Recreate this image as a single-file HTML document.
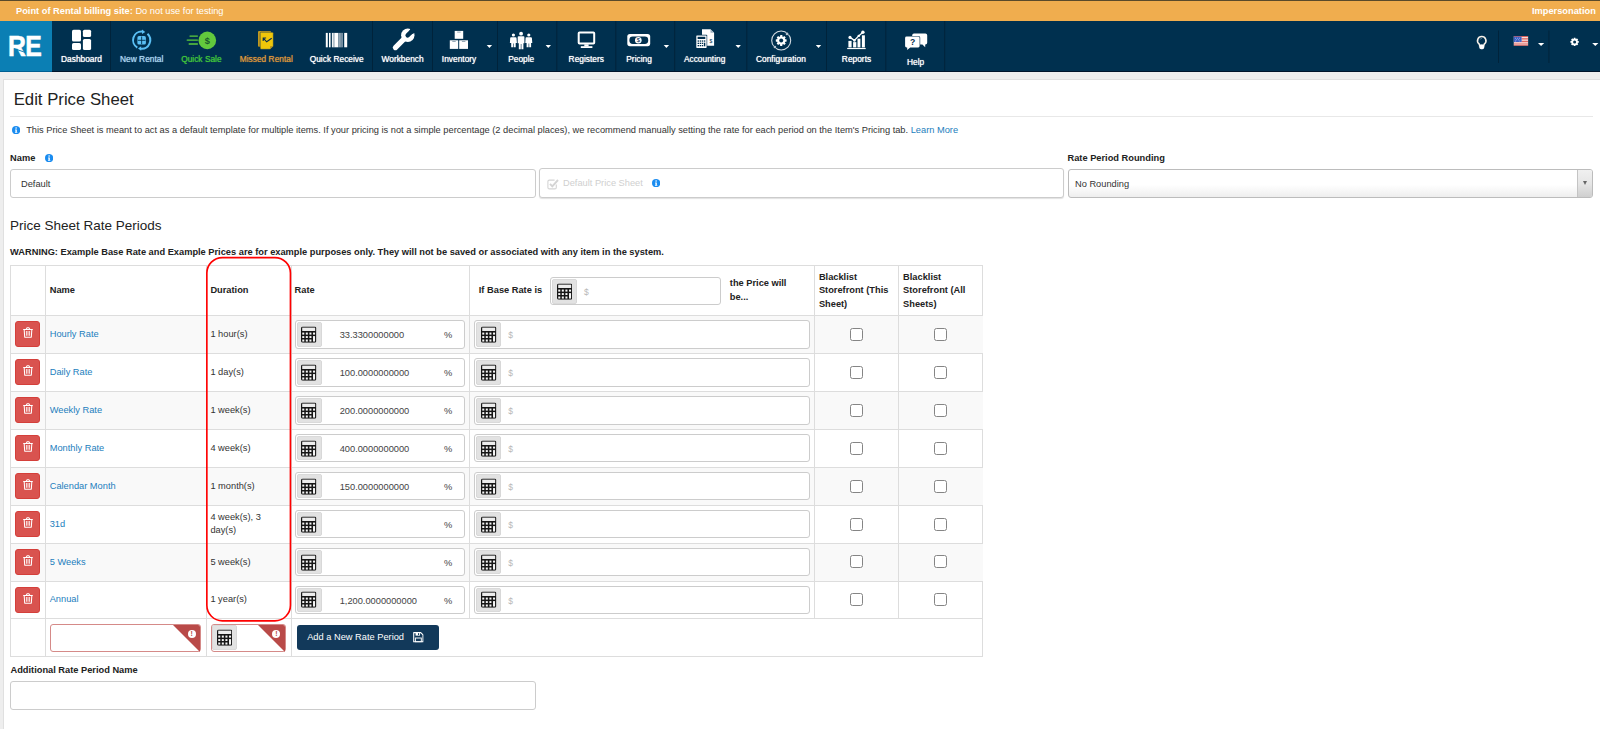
<!DOCTYPE html>
<html lang="en">
<head>
<meta charset="utf-8">
<title>Edit Price Sheet</title>
<style>
*{box-sizing:border-box;margin:0;padding:0}
html,body{width:1600px;height:729px;overflow:hidden}
body{font-family:"Liberation Sans",sans-serif;font-size:9.27px;color:#333;background:#eee;position:relative}
.abs{position:absolute}
#topbar{position:absolute;left:0;top:0;width:1600px;height:21px;background:#f0ad4e;border-top:1px solid #5a4a2a;color:#fff;font-size:9.27px;line-height:20.8px}
#topbar b{position:absolute;left:16px;top:0;white-space:nowrap}
#topbar b span{font-weight:normal}
#topbar .imp{position:absolute;right:4.2px;top:0;font-weight:bold}
#nav{position:absolute;left:0;top:21px;width:1600px;height:50.8px;background:#00304f;border-bottom:1.3px solid #00152b}
#logo{position:absolute;left:0;top:0;width:51.7px;height:50.8px;background:#0b7fb4;border-bottom:1.3px solid #005f92;z-index:2}
.ni{position:absolute;top:0;height:50px;text-align:center;color:#fff;font-size:8.4px;white-space:nowrap}
.ni .lb{position:absolute;left:-40px;right:-40px;top:31.5px;line-height:10px;text-align:center;text-shadow:0 0 1px rgba(255,255,255,.35)}
.ni svg{position:absolute}
.sep{position:absolute;top:0;width:1px;height:49px;background:#00233b}
.caret{position:absolute;top:24px;width:0;height:0;border-left:3px solid transparent;border-right:3px solid transparent;border-top:3px solid #fff}
#panel{position:absolute;left:2.5px;top:79.2px;width:1600px;height:660px;background:#fff;border:1px solid #e0e0e0}
h1{position:absolute;left:13.7px;top:89.7px;font-size:16.74px;font-weight:normal;line-height:20px;color:#222;white-space:nowrap}
.hr{position:absolute;left:10px;top:116px;width:1583px;height:1px;background:#e8e8e8}
.t{position:absolute;white-space:nowrap;line-height:12px}
.b{font-weight:bold;color:#222}
a,.lnk{color:#1c7ebd;text-decoration:none}
.inp{position:absolute;background:#fff;border:1px solid #ccc;border-radius:3px}
h2{position:absolute;left:10px;top:217.8px;font-size:13.5px;font-weight:normal;line-height:16px;color:#222;white-space:nowrap}
.info{position:absolute;width:8.2px;height:8.2px}

.stripe{position:absolute;left:11px;width:971.5px;background:#f9f9f9}
.hl{position:absolute;left:10px;width:973px;height:1px;background:#ddd}
.vl{position:absolute;width:1px;background:#ddd}
.tr{position:absolute;left:15.2px;width:25px;height:26px;background:#d9534f;border:1px solid #d43f3a;border-radius:3px}
.tr svg{position:absolute;left:6.5px;top:5.5px;width:10px;height:11px}
.cb{position:absolute;left:1.2px;top:1.1px;width:24.4px;height:24.5px;background:#e2e2e2;border-radius:3px;box-shadow:inset 0 0 0 .6px #d2d2d2}
.cb svg{position:absolute;left:4.2px;top:3.7px;width:15.4px;height:17.2px}
.pr .cb svg{left:4.9px}
.rv,.pc,.dl{position:absolute;top:8px;line-height:12px;white-space:nowrap;color:#444}
.rv{left:43.7px}
.pc{left:148px}
.dl{left:32.9px;color:#b8b8b8;font-size:8.5px}
.ck{position:absolute;width:13px;height:13px;border:1px solid #858585;border-radius:2.5px;background:#fff}
.err{border-color:#d58a88}
.err .cb{left:.8px;top:.3px;width:24.6px;height:25.4px}
.err .cb svg{left:4.4px;top:4.1px}
.tri{position:absolute;right:0;top:0;width:0;height:0;border-top:27px solid #b94a48;border-left:27px solid transparent;border-top-right-radius:2px}
.ex{position:absolute;right:4.3px;top:5.7px;width:8px;height:8px;border-radius:50%;background:#fff;color:#b94a48;font-size:7px;font-weight:bold;line-height:8px;text-align:center}
.addb{position:absolute;width:142px;height:25.2px;background:#12395a;border-radius:3px;color:#fff;padding-left:10.2px;line-height:25px;white-space:nowrap}
.addb svg{position:absolute;left:116.3px;top:7px;width:10.7px;height:10.5px}
.red{position:absolute;left:200px;top:250px;width:100px;height:380px;overflow:visible}

#logo span{position:absolute;left:8.1px;top:11.2px;font-size:28.8px;line-height:28px;font-weight:bold;color:#fff;transform:scaleX(.86);transform-origin:0 0;letter-spacing:-0.6px;-webkit-text-stroke:0.55px #fff}
#logo i{position:absolute;left:13.6px;top:26.6px;width:11.5px;height:1px;background:#0b7fb4;transform:rotate(19deg);transform-origin:0 0}
.nl{position:absolute;top:32.6px;width:100px;margin-left:-50px;text-align:center;color:#fff;font-size:8.4px;line-height:10px;white-space:nowrap;text-shadow:0 0 .8px currentColor}
</style>
</head>
<body>
<svg width="0" height="0" style="position:absolute"><defs>
<symbol id="calc" viewBox="0 0 16 17"><rect x="0" y="0" width="16" height="17" rx="1.8" fill="#161616"/><rect x="1.25" y="1.25" width="13.5" height="3.5" fill="#ededed"/><g fill="#f6f6f6"><rect x="1.3" y="6.4" width="2.1" height="2.1"/><rect x="5" y="6.4" width="2.1" height="2.1"/><rect x="8.75" y="6.4" width="2.1" height="2.1"/><rect x="12.5" y="6.4" width="2.1" height="2.1"/><rect x="1.3" y="10.05" width="2.1" height="2"/><rect x="5" y="10.05" width="2.1" height="2"/><rect x="8.75" y="10.05" width="2.1" height="2"/><rect x="12.5" y="10.05" width="2.1" height="5.7"/><rect x="1.3" y="13.6" width="2.1" height="2.15"/><rect x="5" y="13.6" width="2.1" height="2.15"/><rect x="8.75" y="13.6" width="2.1" height="2.15"/></g></symbol>
<symbol id="info" viewBox="0 0 10 10"><circle cx="5" cy="5" r="5" fill="#1a8cf0"/><circle cx="5" cy="2.5" r="1" fill="#fff"/><path d="M3.7 4.2H5.9V7.3H6.5V8.2H3.6V7.3H4.2V5.1H3.7Z" fill="#fff"/></symbol>
<symbol id="trash" viewBox="0 0 10 11"><path d="M0.2 2.5H9.8M3.2 2.3L4.1 0.8H5.9L6.8 2.3M1.2 2.7L1.7 10.3H8.3L8.8 2.7" fill="none" stroke="#fff" stroke-width="1.05" stroke-linejoin="round"/><path d="M3.45 4.1V8.8M5 4.1V8.8M6.55 4.1V8.8" stroke="#f8d9d8" stroke-width="1.05" fill="none"/></symbol>
<symbol id="save" viewBox="0 0 11 11"><path d="M0.6 0.6H8L10.4 3V10.4H0.6Z" fill="none" stroke="#fff" stroke-width="1.2" stroke-linejoin="round"/><rect x="2.6" y="0.8" width="4.6" height="3" fill="#fff"/><rect x="5.2" y="1.2" width="1.1" height="2" fill="#12395a"/><rect x="2.4" y="6.3" width="6.2" height="4" fill="none" stroke="#fff" stroke-width="1"/></symbol>
</defs></svg>
<div id="topbar"><b>Point of Rental billing site: <span>Do not use for testing</span></b><span class="imp">Impersonation</span></div>
<div id="nav">
<div id="logo"><span>RE</span><i></i></div>
<svg id="navsvg" width="1600" height="51" viewBox="0 21 1600 51" style="position:absolute;left:0;top:0;overflow:visible">
<g fill="#00233b"><rect x="110" y="21" width="1" height="50"/><rect x="372" y="21" width="1" height="50"/><rect x="432" y="21" width="1" height="50"/><rect x="497" y="21" width="1" height="50"/><rect x="556.3" y="21" width="1" height="50"/><rect x="615.3" y="21" width="1" height="50"/><rect x="674.2" y="21" width="1" height="50"/><rect x="746.3" y="21" width="1" height="50"/><rect x="826" y="21" width="1" height="50"/><rect x="885.3" y="21" width="1" height="50"/><rect x="944.2" y="21" width="1" height="50"/><rect x="1498" y="30.5" width="1" height="32.5"/><rect x="1548.4" y="30.5" width="1" height="32.5"/></g>
<!-- dashboard -->
<g fill="#fff"><rect x="72" y="29.75" width="9" height="11.75" rx="1.6"/><rect x="72" y="43" width="9" height="7" rx="1.6"/><rect x="82.9" y="29.75" width="8.2" height="7.25" rx="1.6"/><rect x="82.9" y="38.9" width="8.2" height="11.1" rx="1.6"/></g>
<!-- new rental -->
<g fill="none" stroke="#5bc0f5" stroke-width="2"><path d="M137.3 47.55A8.6 8.6 0 0 1 142.2 31.55"/><path d="M147.5 33.85A8.6 8.6 0 0 1 141 48.7"/></g>
<g fill="#5bc0f5"><path d="M142 29.4L145.2 31.9L142 34Z"/><path d="M141.2 50.8L138 48.4L141.2 46.2Z"/><rect x="137.4" y="36.1" width="8.5" height="8.4" rx="1.6"/></g>
<g stroke="#00304f" stroke-width="0.9"><path d="M141.65 36.5V44.2M137.8 40.3H145.5"/></g>
<!-- quick sale -->
<g stroke="#5ccb3c" stroke-width="1.35" stroke-linecap="round"><path d="M190 36.1H197.4M187.2 40.1H197.4M189.2 44H197.4"/></g>
<circle cx="207.3" cy="40.4" r="8.8" fill="#62c93d"/>
<text x="207.4" y="43.9" font-family="Liberation Sans, sans-serif" font-size="9.3" font-weight="bold" text-anchor="middle" fill="#1b5a2b">$</text>
<!-- missed rental -->
<rect x="258" y="30.9" width="13.1" height="15.8" rx="1" fill="#c29a1f"/>
<path d="M261.2 32.2H272.3Q273.3 32.2 273.3 33.2V46L270 49.3H261.2Q260.2 49.3 260.2 48.3V33.2Q260.2 32.2 261.2 32.2Z" fill="#efc70a" stroke="#0a3350" stroke-width="0.5"/>
<path d="M270 49.3V46.6Q270 46 270.6 46H273.3Z" fill="#b8941c"/>
<path d="M263.5 38.3L266.7 41.8L271.7 38.2M263.2 40.9V38H266.1" fill="none" stroke="#0b2f4a" stroke-width="1.1"/>
<!-- quick receive -->
<g><rect x="325.8" y="32.9" width="2" height="14.4" fill="#fff"/><rect x="329" y="32.9" width="1.6" height="14.4" fill="#fff"/><rect x="331.9" y="32.9" width="1.8" height="14.4" fill="#f2f5f7"/><rect x="333.7" y="32.9" width="0.6" height="14.4" fill="#c5d0d8"/><rect x="334.3" y="32.9" width="3.8" height="14.4" fill="#fff"/><rect x="338.1" y="32.9" width="0.6" height="14.4" fill="#b9c6d0"/><rect x="338.7" y="32.9" width="2" height="14.4" fill="#93a7b6"/><rect x="340.7" y="32.9" width="0.8" height="14.4" fill="#b4c2cd"/><rect x="341.5" y="32.9" width="1.4" height="14.4" fill="#8199ab"/><rect x="344.2" y="32.9" width="3" height="14.4" fill="#fff"/></g>
<!-- workbench wrench -->
<g><path d="M395.4 47.6L405.8 37.2" stroke="#fff" stroke-width="5.2" stroke-linecap="round" fill="none"/><circle cx="407.8" cy="35.2" r="6.7" fill="#fff"/><path d="M407.3 35.7L411.2 27.2L416.8 32.2Z" fill="#00304f"/><path d="M407.6 35.4L412.9 30.1" stroke="#00304f" stroke-width="4.4" stroke-linecap="round"/></g>
<!-- inventory -->
<g fill="#fff"><rect x="454.7" y="30.9" width="8.5" height="7.9"/><rect x="449.8" y="40.3" width="8.4" height="8.6"/><rect x="459.2" y="40.3" width="8.8" height="8.6"/></g>
<g stroke="#6d8599" stroke-width="0.7"><path d="M457.2 32.1H460.7M452.3 41.5H455.7M461.9 41.5H465.4"/></g>
<!-- people -->
<g fill="#fff"><circle cx="521.1" cy="33.7" r="1.9"/><path d="M518.6 36.2H523.6Q524.4 36.2 524.4 37V43.2H523.4V49.3H521.4V44H520.8V49.3H518.8V43.2H517.7V37Q517.7 36.2 518.6 36.2Z"/><circle cx="513.4" cy="35" r="1.6"/><path d="M511 37.2H515.6Q516.4 37.2 516.5 38L516.9 43H515.7V47.3H513.8V43.5H513.2V47.3H511.2V43H509.9L510.2 38Q510.3 37.2 511 37.2Z"/><circle cx="528.8" cy="35" r="1.6"/><path d="M526.4 37.2H531Q531.8 37.2 531.9 38L532.3 43H531.1V47.3H529.2V43.5H528.6V47.3H526.6V43H525.3L525.6 38Q525.7 37.2 526.4 37.2Z"/></g>
<!-- registers -->
<rect x="578.7" y="32.4" width="15.5" height="11.1" rx="0.8" fill="none" stroke="#fff" stroke-width="2"/>
<g fill="#fff"><rect x="584.3" y="44.3" width="4.3" height="2.2"/><rect x="580.8" y="46.2" width="11.6" height="1.8"/></g>
<!-- pricing -->
<rect x="627.3" y="34" width="22.9" height="12.2" rx="2.6" fill="#fff"/>
<rect x="629.4" y="36.5" width="18.8" height="7.4" rx="3.4" fill="#00304f"/>
<circle cx="638.3" cy="40.2" r="3.3" fill="#fff"/>
<text x="638.3" y="42.4" font-family="Liberation Sans, sans-serif" font-size="6" text-anchor="middle" fill="#00304f">$</text>
<!-- accounting -->
<path d="M702 29.2H710.5L714.1 32.8V45.8H702Z" fill="#fff"/>
<path d="M710.5 29.2V32.8H714.1Z" fill="#9fb2c2"/>
<text x="710.9" y="43" font-family="Liberation Sans, sans-serif" font-size="5" text-anchor="middle" fill="#00304f">$</text>
<rect x="695.7" y="34.8" width="11.5" height="13.7" rx="0.8" fill="#00304f"/>
<rect x="696.3" y="35.4" width="10.3" height="12.5" rx="0.6" fill="#fff"/>
<rect x="697.6" y="36.8" width="7.7" height="2.2" fill="#00304f"/>
<g fill="#00304f"><rect x="697.6" y="40.4" width="1.4" height="1.3"/><rect x="699.7" y="40.4" width="1.4" height="1.3"/><rect x="701.8" y="40.4" width="1.4" height="1.3"/><rect x="703.9" y="40.4" width="1.4" height="1.3"/><rect x="697.6" y="42.7" width="1.4" height="1.3"/><rect x="699.7" y="42.7" width="1.4" height="1.3"/><rect x="701.8" y="42.7" width="1.4" height="1.3"/><rect x="703.9" y="42.7" width="1.4" height="3.6"/><rect x="697.6" y="45" width="1.4" height="1.3"/><rect x="699.7" y="45" width="1.4" height="1.3"/><rect x="701.8" y="45" width="1.4" height="1.3"/></g>
<!-- configuration -->
<circle cx="781.2" cy="40.5" r="9.5" fill="none" stroke="#d3dbe2" stroke-width="1.1"/>
<circle cx="787" cy="33.9" r="1.7" fill="#00304f"/><circle cx="787" cy="33.9" r="1.3" fill="#b7c3ce"/>
<circle cx="774.9" cy="47" r="1.7" fill="#00304f"/><circle cx="774.9" cy="47" r="1.3" fill="#b7c3ce"/>
<g transform="translate(781.2 40.5)"><g fill="#fff"><circle r="4.1"/><g id="gt"><rect x="-1.15" y="-5.4" width="2.3" height="10.8" rx="0.4"/><rect x="-1.15" y="-5.4" width="2.3" height="10.8" rx="0.4" transform="rotate(45)"/><rect x="-1.15" y="-5.4" width="2.3" height="10.8" rx="0.4" transform="rotate(90)"/><rect x="-1.15" y="-5.4" width="2.3" height="10.8" rx="0.4" transform="rotate(135)"/></g></g><circle r="2" fill="#00304f"/></g>
<!-- reports -->
<g fill="#fff"><rect x="847.2" y="47.9" width="18.5" height="1.2"/><rect x="848.4" y="40.9" width="3.2" height="6.5"/><rect x="853.1" y="42.1" width="3.2" height="5.3"/><rect x="857.5" y="38.7" width="2.9" height="8.7"/><rect x="861.9" y="35.3" width="3" height="12.1"/><circle cx="850" cy="37.4" r="1.6"/><circle cx="854.4" cy="40.4" r="1.3"/><circle cx="858.7" cy="35.9" r="1.2"/><circle cx="862.9" cy="32.2" r="1.7"/></g>
<path d="M850 37.4L854.4 40.4L858.7 35.9L862.9 32.2" fill="none" stroke="#fff" stroke-width="1.3"/>
<!-- help -->
<path d="M914 33.4H925.4Q927.2 33.4 927.2 35.2V42.8Q927.2 44.6 925.4 44.6H925.2V47.2L922.4 44.6H914Q912.2 44.6 912.2 42.8V35.2Q912.2 33.4 914 33.4Z" fill="#fff"/>
<path d="M906.4 36H918.6Q920.2 36 920.2 37.6V46.3Q920.2 47.9 918.6 47.9H910.4L907 50.6V47.9H906.4Q904.6 47.9 904.6 46.3V37.6Q904.6 36 906.4 36Z" fill="#00304f"/>
<path d="M906.6 36.6H918.2Q919.6 36.6 919.6 38V46Q919.6 47.4 918.2 47.4H910.2L907.2 49.9V47.4H906.6Q905.1 47.4 905.1 46V38Q905.1 36.6 906.6 36.6Z" fill="#fff"/>
<text x="912.6" y="45.3" font-family="Liberation Sans, sans-serif" font-size="8.6" font-weight="bold" text-anchor="middle" fill="#00304f">?</text>
<!-- carets -->
<g fill="#fff"><path d="M486.7 45H492.1L489.4 48Z"/><path d="M545.6 45H551L548.3 48Z"/><path d="M663.7 45H669.1L666.4 48Z"/><path d="M735.5 45H740.9L738.2 48Z"/><path d="M815.8 45H821.2L818.5 48Z"/><path d="M1538 43H1544.2L1541.1 46Z"/><path d="M1592.2 43H1598.4L1595.3 46Z"/></g>
<!-- bulb -->
<path d="M1481.75 36.5A4.15 4.15 0 0 1 1484.5 43.8Q1483.8 44.7 1483.8 45.6H1479.7Q1479.7 44.7 1479 43.8A4.15 4.15 0 0 1 1481.75 36.5Z" fill="none" stroke="#f6f0e8" stroke-width="1.6"/>
<rect x="1479.3" y="44.6" width="4.9" height="4.7" rx="1.8" fill="#fff"/>
<path d="M1480.2 39.6A1.8 1.8 0 0 1 1482 38.2" fill="none" stroke="#8ea7b8" stroke-width="0.6"/>
<!-- flag -->
<rect x="1513.8" y="36.2" width="14.3" height="9.4" fill="#fff"/>
<g fill="#d8443c"><rect x="1513.8" y="36.2" width="14.3" height="0.9"/><rect x="1521.4" y="37.9" width="6.7" height="0.8"/><rect x="1521.4" y="39.5" width="6.7" height="0.8"/><rect x="1521.4" y="41.1" width="6.7" height="0.8"/><rect x="1513.8" y="42.7" width="14.3" height="0.8"/><rect x="1513.8" y="44.5" width="14.3" height="1.1"/></g>
<rect x="1513.8" y="36.6" width="7.8" height="5.4" fill="#3c5fc4"/>
<g fill="#c8d4f4"><rect x="1515" y="37.8" width="0.8" height="0.8"/><rect x="1517" y="37.8" width="0.8" height="0.8"/><rect x="1519" y="37.8" width="0.8" height="0.8"/><rect x="1516" y="39.4" width="0.8" height="0.8"/><rect x="1518" y="39.4" width="0.8" height="0.8"/><rect x="1515" y="40.6" width="0.8" height="0.8"/><rect x="1519.4" y="40.6" width="0.8" height="0.8"/></g>
<!-- gear small -->
<g transform="translate(1574.6 41.9)"><g fill="#fff"><circle r="3.2"/><rect x="-0.95" y="-4.2" width="1.9" height="8.4" rx="0.3"/><rect x="-0.95" y="-4.2" width="1.9" height="8.4" rx="0.3" transform="rotate(45)"/><rect x="-0.95" y="-4.2" width="1.9" height="8.4" rx="0.3" transform="rotate(90)"/><rect x="-0.95" y="-4.2" width="1.9" height="8.4" rx="0.3" transform="rotate(135)"/></g><circle r="1.5" fill="#00304f"/></g>
</svg>
<div class="nl" style="left:81.5px">Dashboard</div>
<div class="nl" style="left:141.7px;color:#a9d4ef">New Rental</div>
<div class="nl" style="left:201.4px;color:#3fc43c">Quick Sale</div>
<div class="nl" style="left:266.3px;color:#dc963c">Missed Rental</div>
<div class="nl" style="left:336.7px">Quick Receive</div>
<div class="nl" style="left:402.6px">Workbench</div>
<div class="nl" style="left:459.1px">Inventory</div>
<div class="nl" style="left:521.2px">People</div>
<div class="nl" style="left:586.3px">Registers</div>
<div class="nl" style="left:639.1px">Pricing</div>
<div class="nl" style="left:704.6px">Accounting</div>
<div class="nl" style="left:780.9px">Configuration</div>
<div class="nl" style="left:856.5px">Reports</div>
<div class="nl" style="left:915.6px;top:36px">Help</div>
</div>
<div id="panel"></div>
<h1>Edit Price Sheet</h1>
<div class="hr"></div>

<svg class="info" viewBox="0 0 10 10" style="left:12px;top:126px"><use href="#info"/></svg>
<div class="t" style="left:26.2px;top:124px">This Price Sheet is meant to act as a default template for multiple items. If your pricing is not a simple percentage (2 decimal places), we recommend manually setting the rate for each period on the Item's Pricing tab. <a>Learn More</a></div>
<div class="t b" style="left:10.1px;top:151.8px">Name</div>
<svg class="info" viewBox="0 0 10 10" style="left:45px;top:153.5px"><use href="#info"/></svg>
<div class="inp" style="left:10px;top:169px;width:526px;height:28.5px"></div>
<div class="t" style="left:21px;top:178px">Default</div>
<div class="inp" id="dps" style="left:539px;top:168px;width:525px;height:29.6px;box-shadow:0 1px 1px rgba(0,0,0,.12)"></div>
<svg class="abs" style="left:547px;top:178px;width:12px;height:12px" viewBox="0 0 12 12"><path d="M9.3 6.6V9.4Q9.3 10.9 7.8 10.9H2.4Q0.9 10.9 0.9 9.4V3.6Q0.9 2.1 2.4 2.1H7.6" fill="none" stroke="#d4d4d4" stroke-width="1.1"/><path d="M3 5.8L5.3 8.3L11 2" fill="none" stroke="#d4d4d4" stroke-width="1.9"/></svg>
<div class="t" style="left:563px;top:177px;color:#cfcfcf">Default Price Sheet</div>
<svg class="info" viewBox="0 0 10 10" style="left:652px;top:179px"><use href="#info"/></svg>
<div class="t b" style="left:1067.5px;top:152px">Rate Period Rounding</div>
<div class="inp" id="sel" style="left:1067.5px;top:169px;width:525.5px;height:28.6px;border-color:#bcbcbc;background:linear-gradient(#fff 55%,#eee)"><div style="position:absolute;right:0;top:0;width:15px;height:26.6px;border-left:1px solid #c4c4c4;border-radius:0 2px 2px 0;background:linear-gradient(#f0f0f0,#e6e6e6 50%,#cfcfcf)"></div><div style="position:absolute;right:4.6px;top:10.6px;width:0;height:0;border-left:2.8px solid transparent;border-right:2.8px solid transparent;border-top:4.2px solid #666"></div></div>
<div class="t" style="left:1075px;top:178px">No Rounding</div>
<h2>Price Sheet Rate Periods</h2>
<div class="t b" style="left:10.1px;top:246px">WARNING: Example Base Rate and Example Prices are for example purposes only. They will not be saved or associated with any item in the system.</div>
<div id="tbl" style="position:absolute;left:10px;top:264.9px;width:973.3px;height:392.6px;border:1px solid #ddd;background:#fff"></div>
<div class="stripe" style="top:315.8px;height:37.4px"></div>
<div class="stripe" style="top:391.7px;height:37.4px"></div>
<div class="stripe" style="top:467.6px;height:37.5px"></div>
<div class="stripe" style="top:543.5px;height:37.4px"></div>
<div class="hl" style="top:315.0px"></div>
<div class="hl" style="top:352.9px"></div>
<div class="hl" style="top:390.9px"></div>
<div class="hl" style="top:428.8px"></div>
<div class="hl" style="top:466.8px"></div>
<div class="hl" style="top:504.8px"></div>
<div class="hl" style="top:542.7px"></div>
<div class="hl" style="top:580.6px"></div>
<div class="hl" style="top:618.2px"></div>
<div class="vl" style="left:44.6px;top:265.5px;height:391.2px"></div>
<div class="vl" style="left:205.6px;top:265.5px;height:391.2px"></div>
<div class="vl" style="left:290.6px;top:265.5px;height:391.2px"></div>
<div class="vl" style="left:469.1px;top:265.5px;height:353.0px"></div>
<div class="vl" style="left:814.1px;top:265.5px;height:353.0px"></div>
<div class="vl" style="left:898.1px;top:265.5px;height:353.0px"></div>
<div class="t b" style="left:49.7px;top:284.4px">Name</div>
<div class="t b" style="left:210.4px;top:284.4px">Duration</div>
<div class="t b" style="left:294.6px;top:284.4px">Rate</div>
<div class="t b" style="left:478.8px;top:284.4px">If Base Rate is</div>
<div class="inp pr" style="left:550px;top:277px;width:171px;height:28px"><div class="cb"><svg class="calc" viewBox="0 0 16 17"><use href="#calc"/></svg></div><span class="dl">$</span></div>
<div class="t b" style="left:729.8px;top:277.3px;line-height:13.6px">the Price will<br>be...</div>
<div class="t b" style="left:818.9px;top:270.8px;line-height:13.5px">Blacklist<br>Storefront (This<br>Sheet)</div>
<div class="t b" style="left:903.1px;top:270.8px;line-height:13.5px">Blacklist<br>Storefront (All<br>Sheets)</div>
<div class="tr" style="top:320.9px"><svg viewBox="0 0 10 11"><use href="#trash"/></svg></div>
<div class="t lnk" style="left:49.7px;top:327.8px">Hourly Rate</div>
<div class="t" style="left:210.4px;top:327.8px">1 hour(s)</div>
<div class="inp" style="left:295px;top:320.1px;width:170px;height:28.5px"><div class="cb"><svg class="calc" viewBox="0 0 16 17"><use href="#calc"/></svg></div><span class="rv">33.3300000000</span><span class="pc">%</span></div>
<div class="inp pr" style="left:474.3px;top:320.1px;width:335.5px;height:28.5px"><div class="cb"><svg class="calc" viewBox="0 0 16 17"><use href="#calc"/></svg></div><span class="dl">$</span></div>
<div class="ck" style="left:850px;top:327.7px"></div>
<div class="ck" style="left:934px;top:327.7px"></div>
<div class="tr" style="top:358.8px"><svg viewBox="0 0 10 11"><use href="#trash"/></svg></div>
<div class="t lnk" style="left:49.7px;top:365.7px">Daily Rate</div>
<div class="t" style="left:210.4px;top:365.7px">1 day(s)</div>
<div class="inp" style="left:295px;top:358.0px;width:170px;height:28.5px"><div class="cb"><svg class="calc" viewBox="0 0 16 17"><use href="#calc"/></svg></div><span class="rv">100.0000000000</span><span class="pc">%</span></div>
<div class="inp pr" style="left:474.3px;top:358.0px;width:335.5px;height:28.5px"><div class="cb"><svg class="calc" viewBox="0 0 16 17"><use href="#calc"/></svg></div><span class="dl">$</span></div>
<div class="ck" style="left:850px;top:365.6px"></div>
<div class="ck" style="left:934px;top:365.6px"></div>
<div class="tr" style="top:396.8px"><svg viewBox="0 0 10 11"><use href="#trash"/></svg></div>
<div class="t lnk" style="left:49.7px;top:403.7px">Weekly Rate</div>
<div class="t" style="left:210.4px;top:403.7px">1 week(s)</div>
<div class="inp" style="left:295px;top:396.0px;width:170px;height:28.5px"><div class="cb"><svg class="calc" viewBox="0 0 16 17"><use href="#calc"/></svg></div><span class="rv">200.0000000000</span><span class="pc">%</span></div>
<div class="inp pr" style="left:474.3px;top:396.0px;width:335.5px;height:28.5px"><div class="cb"><svg class="calc" viewBox="0 0 16 17"><use href="#calc"/></svg></div><span class="dl">$</span></div>
<div class="ck" style="left:850px;top:403.6px"></div>
<div class="ck" style="left:934px;top:403.6px"></div>
<div class="tr" style="top:434.7px"><svg viewBox="0 0 10 11"><use href="#trash"/></svg></div>
<div class="t lnk" style="left:49.7px;top:441.6px">Monthly Rate</div>
<div class="t" style="left:210.4px;top:441.6px">4 week(s)</div>
<div class="inp" style="left:295px;top:433.9px;width:170px;height:28.5px"><div class="cb"><svg class="calc" viewBox="0 0 16 17"><use href="#calc"/></svg></div><span class="rv">400.0000000000</span><span class="pc">%</span></div>
<div class="inp pr" style="left:474.3px;top:433.9px;width:335.5px;height:28.5px"><div class="cb"><svg class="calc" viewBox="0 0 16 17"><use href="#calc"/></svg></div><span class="dl">$</span></div>
<div class="ck" style="left:850px;top:441.5px"></div>
<div class="ck" style="left:934px;top:441.5px"></div>
<div class="tr" style="top:472.7px"><svg viewBox="0 0 10 11"><use href="#trash"/></svg></div>
<div class="t lnk" style="left:49.7px;top:479.6px">Calendar Month</div>
<div class="t" style="left:210.4px;top:479.6px">1 month(s)</div>
<div class="inp" style="left:295px;top:471.9px;width:170px;height:28.5px"><div class="cb"><svg class="calc" viewBox="0 0 16 17"><use href="#calc"/></svg></div><span class="rv">150.0000000000</span><span class="pc">%</span></div>
<div class="inp pr" style="left:474.3px;top:471.9px;width:335.5px;height:28.5px"><div class="cb"><svg class="calc" viewBox="0 0 16 17"><use href="#calc"/></svg></div><span class="dl">$</span></div>
<div class="ck" style="left:850px;top:479.5px"></div>
<div class="ck" style="left:934px;top:479.5px"></div>
<div class="tr" style="top:510.7px"><svg viewBox="0 0 10 11"><use href="#trash"/></svg></div>
<div class="t lnk" style="left:49.7px;top:517.6px">31d</div>
<div class="t" style="left:210.4px;top:510.9px;line-height:13.3px">4 week(s), 3<br>day(s)</div>
<div class="inp" style="left:295px;top:509.9px;width:170px;height:28.5px"><div class="cb"><svg class="calc" viewBox="0 0 16 17"><use href="#calc"/></svg></div><span class="rv"></span><span class="pc">%</span></div>
<div class="inp pr" style="left:474.3px;top:509.9px;width:335.5px;height:28.5px"><div class="cb"><svg class="calc" viewBox="0 0 16 17"><use href="#calc"/></svg></div><span class="dl">$</span></div>
<div class="ck" style="left:850px;top:517.5px"></div>
<div class="ck" style="left:934px;top:517.5px"></div>
<div class="tr" style="top:548.6px"><svg viewBox="0 0 10 11"><use href="#trash"/></svg></div>
<div class="t lnk" style="left:49.7px;top:555.5px">5 Weeks</div>
<div class="t" style="left:210.4px;top:555.5px">5 week(s)</div>
<div class="inp" style="left:295px;top:547.8px;width:170px;height:28.5px"><div class="cb"><svg class="calc" viewBox="0 0 16 17"><use href="#calc"/></svg></div><span class="rv"></span><span class="pc">%</span></div>
<div class="inp pr" style="left:474.3px;top:547.8px;width:335.5px;height:28.5px"><div class="cb"><svg class="calc" viewBox="0 0 16 17"><use href="#calc"/></svg></div><span class="dl">$</span></div>
<div class="ck" style="left:850px;top:555.4px"></div>
<div class="ck" style="left:934px;top:555.4px"></div>
<div class="tr" style="top:586.5px"><svg viewBox="0 0 10 11"><use href="#trash"/></svg></div>
<div class="t lnk" style="left:49.7px;top:593.4px">Annual</div>
<div class="t" style="left:210.4px;top:593.4px">1 year(s)</div>
<div class="inp" style="left:295px;top:585.7px;width:170px;height:28.5px"><div class="cb"><svg class="calc" viewBox="0 0 16 17"><use href="#calc"/></svg></div><span class="rv">1,200.0000000000</span><span class="pc">%</span></div>
<div class="inp pr" style="left:474.3px;top:585.7px;width:335.5px;height:28.5px"><div class="cb"><svg class="calc" viewBox="0 0 16 17"><use href="#calc"/></svg></div><span class="dl">$</span></div>
<div class="ck" style="left:850px;top:593.3px"></div>
<div class="ck" style="left:934px;top:593.3px"></div>
<div class="inp err" style="left:50px;top:623.8px;width:151px;height:28.3px"><div class="tri"></div><div class="ex">!</div></div>
<div class="inp err" style="left:210.6px;top:623.8px;width:75px;height:28.3px"><div class="cb"><svg class="calc" viewBox="0 0 16 17"><use href="#calc"/></svg></div><div class="tri"></div><div class="ex">!</div></div>
<div class="addb" style="left:297px;top:625.0px">Add a New Rate Period<svg viewBox="0 0 11 11"><use href="#save"/></svg></div>
<svg class="red" viewBox="200 250 100 380"><rect x="206.85" y="257.6" width="83.6" height="363.2" rx="15.5" fill="none" stroke="#f00" stroke-width="1.65"/></svg>
<div class="t b" style="left:10.5px;top:664px">Additional Rate Period Name</div>
<div class="inp" style="left:10px;top:681px;width:526px;height:28.6px"></div>
</body>
</html>
